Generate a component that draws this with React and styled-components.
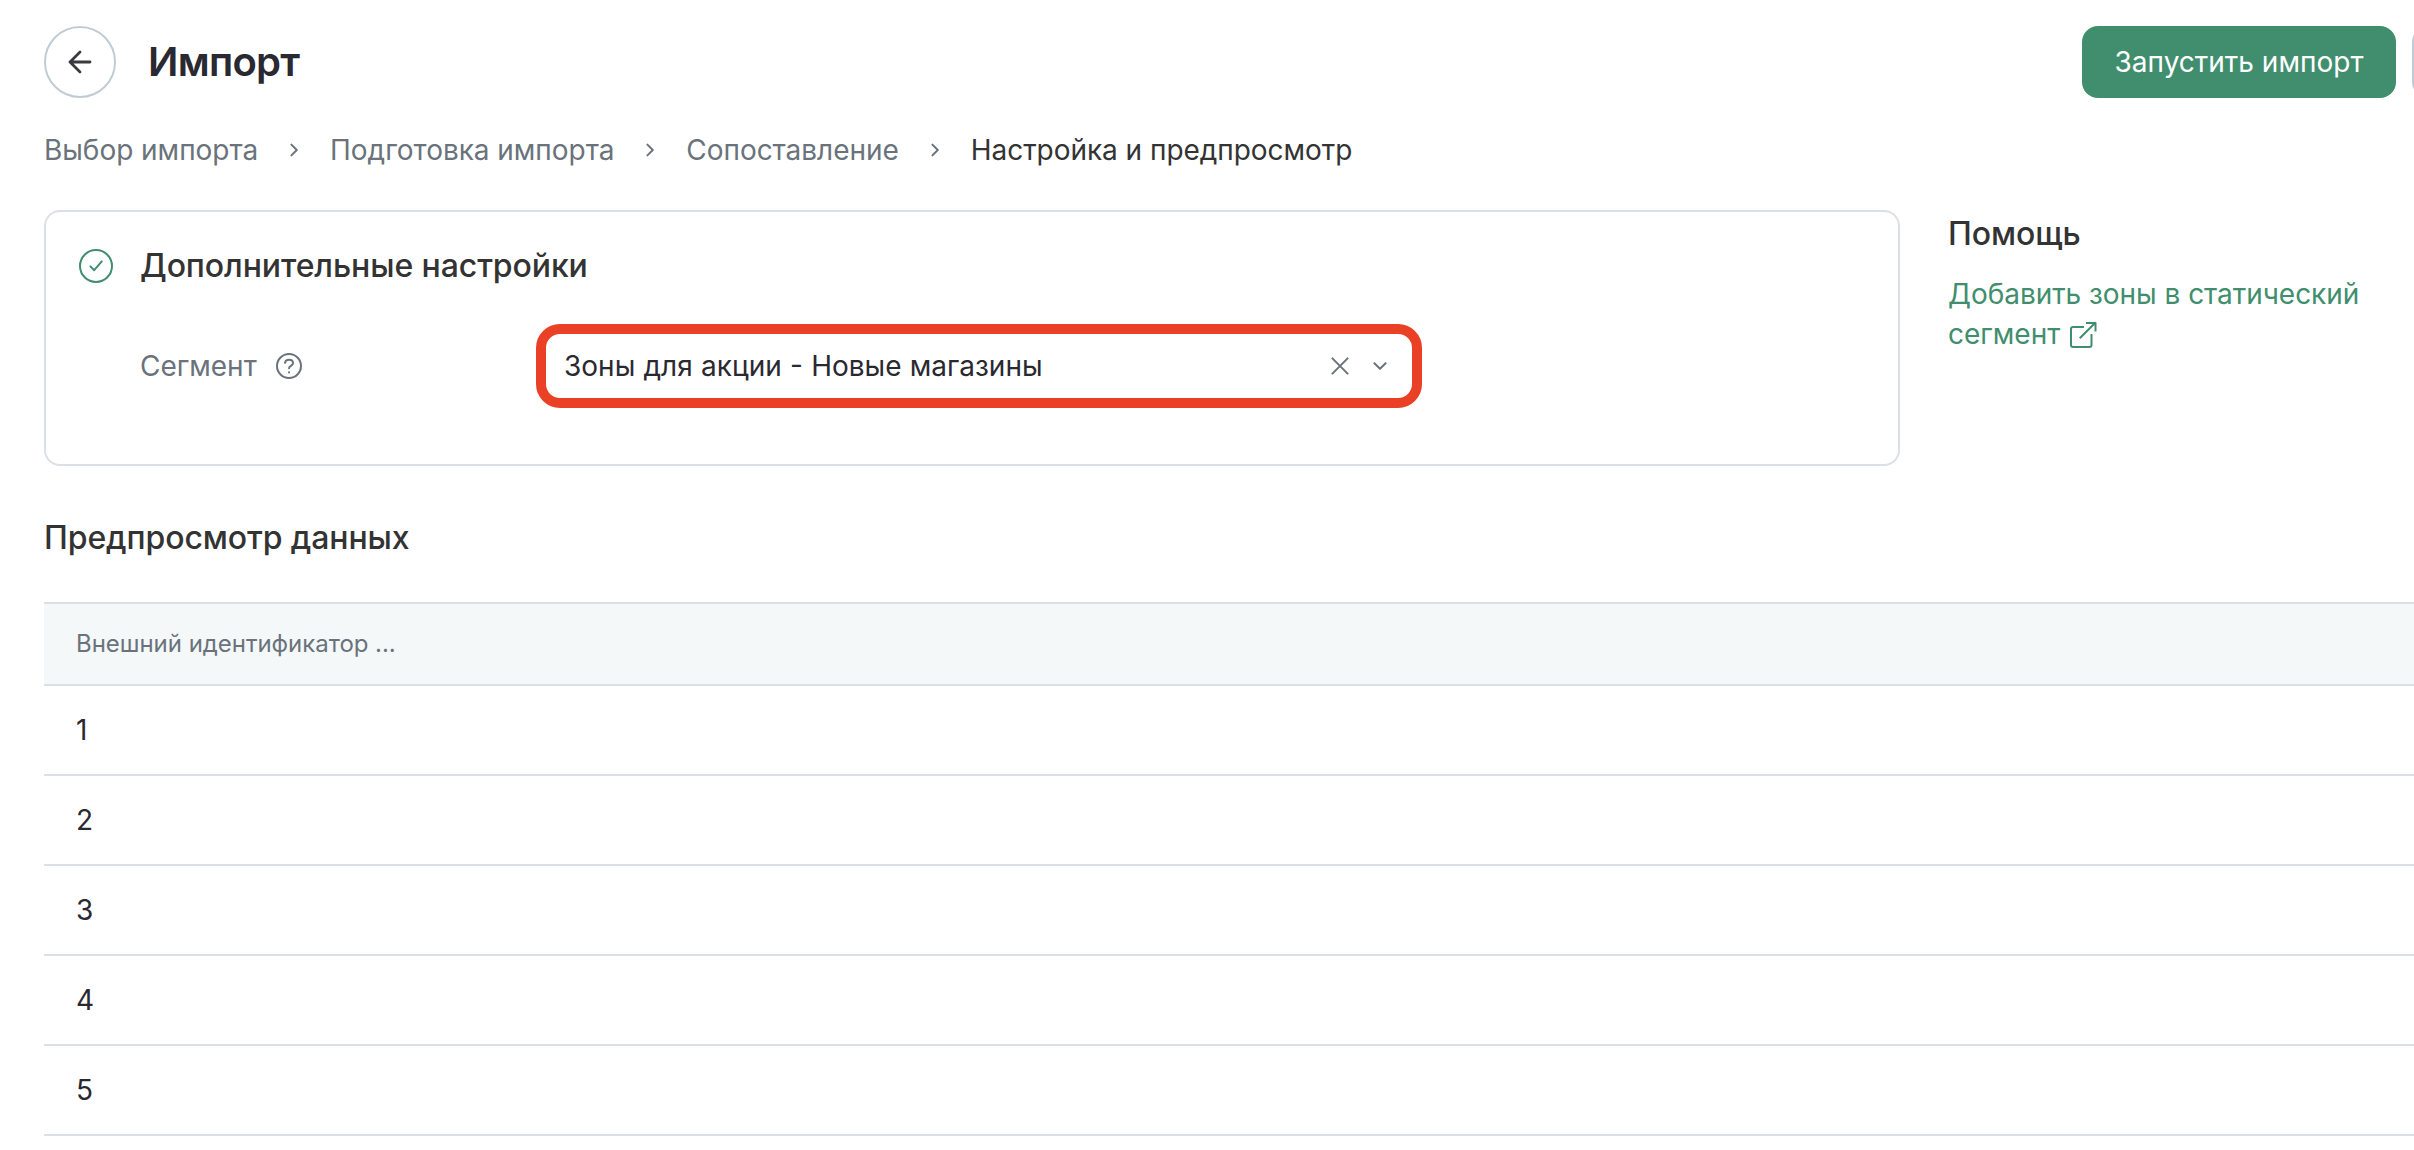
import React from 'react';
import styled, { createGlobalStyle } from 'styled-components';

const Colors = {
  text : '#333333',
  dark : '#2a2931',
  gray : '#6a737b',
  green : '#418e6e',
  border : '#dae0e6',
  control : '#c0ccd5',
  head : '#f4f8f9',
  mark : '#ea4025',
};

const steps = ['Выбор импорта', 'Подготовка импорта', 'Сопоставление', 'Настройка и предпросмотр'];
const rows = ['1', '2', '3', '4', '5'];

function App() {
  return (
    <>
      <GlobalStyle />
      <Page>
        <Header>
          <BackButton>
            <svg width="28" height="28" viewBox="0 0 28 28" fill="none" stroke="#3b3b3f" strokeWidth="2.8" strokeLinecap="round" strokeLinejoin="round">
              <path d="M24 14H4M14 4L4 14L14 24" />
            </svg>
          </BackButton>
          <Title>Импорт</Title>
          <Actions>
            <RunButton>Запустить импорт</RunButton>
            <MoreButton />
          </Actions>
        </Header>
        <Steps>
          {steps.map((step, i) => (
            <React.Fragment key={step}>
              {i > 0 && (
                <svg width="10" height="14" viewBox="0 0 10 14" fill="none" stroke={Colors.gray} strokeWidth="2" strokeLinecap="round" strokeLinejoin="round">
                  <path d="M2.4 1.6L7.8 7L2.4 12.4" />
                </svg>
              )}
              <Step $active={i === steps.length - 1}>{step}</Step>
            </React.Fragment>
          ))}
        </Steps>
        <Content>
          <Card>
            <CardHead>
              <svg width="34" height="34" viewBox="0 0 34 34" fill="none" stroke={Colors.green} strokeWidth="2" strokeLinecap="round" strokeLinejoin="round">
                <circle cx="17" cy="17" r="16" />
                <path d="M11.4 17.4L15.2 21.2L22.8 12.4" />
              </svg>
              <Heading>Дополнительные настройки</Heading>
            </CardHead>
            <Field>
              <Label>
                Сегмент
                <svg width="26" height="26" viewBox="0 0 26 26" fill="none" stroke={Colors.gray} strokeWidth="2" strokeLinecap="round">
                  <circle cx="13" cy="13" r="12" />
                  <path d="M9 9.8C9.3 7.9 11 6.8 13 6.8C15.4 6.8 17 8.3 17 10.2C17 12.8 13 12.8 13 15.2" />
                  <path d="M13 19.3V19.4" />
                </svg>
              </Label>
              <Select>
                <Value>Зоны для акции - Новые магазины</Value>
                <svg width="18" height="18" viewBox="0 0 18 18" fill="none" stroke={Colors.gray} strokeWidth="2" strokeLinecap="round">
                  <path d="M1.4 1.4L16.6 16.6M16.6 1.4L1.4 16.6" />
                </svg>
                <svg width="14" height="10" viewBox="0 0 14 10" fill="none" stroke={Colors.gray} strokeWidth="2" strokeLinecap="round" strokeLinejoin="round">
                  <path d="M1.4 2.2L7 7.8L12.6 2.2" />
                </svg>
              </Select>
            </Field>
          </Card>
          <Help>
            <Heading>Помощь</Heading>
            <Link>
              Добавить зоны в статический сегмент
              <svg width="28" height="28" viewBox="0 0 28 28" fill="none" stroke={Colors.green} strokeWidth="2" strokeLinecap="square" strokeLinejoin="round">
                <path d="M14 6H4Q2 6 2 8V24Q2 26 4 26H20.5Q22.5 26 22.5 24V14" />
                <path d="M11.5 16.5L26 2M18 2H26.5V9.5" />
              </svg>
            </Link>
          </Help>
        </Content>
        <Preview>
          <Heading>Предпросмотр данных</Heading>
          <Table>
            <HeadRow>Внешний идентификатор ...</HeadRow>
            {rows.map((row) => (
              <Row key={row}>{row}</Row>
            ))}
          </Table>
        </Preview>
      </Page>
    </>
  );
}

const GlobalStyle = createGlobalStyle`
  * {
    box-sizing : border-box;
  }
  body {
    margin : 0;
    background-color : #ffffff;
    overflow : hidden;
    font-family : Inter, 'Liberation Sans', sans-serif;
  }
  svg {
    display : block;
    flex-shrink : 0;
  }
`;
const Page = styled.div`
  height : 1150px;
  padding : 26px 0 0 44px;
  overflow : hidden;
  color : ${Colors.text};
  font-size : 28px;
  line-height : 40px;
  letter-spacing : -0.04px;
`;
const Header = styled.div`
  display : flex;
  align-items : center;
`;
const BackButton = styled.button`
  display : flex;
  align-items : center;
  justify-content : center;
  width : 72px;
  height : 72px;
  padding : 0;
  border : 2px solid ${Colors.control};
  border-radius : 50%;
  background-color : transparent;
`;
const Title = styled.h1`
  margin : 0 0 0 32px;
  font-size : 40px;
  font-weight : 600;
  line-height : 48px;
  letter-spacing : -0.7px;
  color : ${Colors.dark};
`;
const Actions = styled.div`
  display : flex;
  gap : 16px;
  width : 332px;
  margin-left : auto;
  overflow : hidden;
`;
const RunButton = styled.button`
  flex-shrink : 0;
  width : 314px;
  height : 72px;
  padding : 0;
  border : none;
  border-radius : 16px;
  background-color : ${Colors.green};
  color : #ffffff;
  font-family : inherit;
  font-size : 28px;
`;
const MoreButton = styled.button`
  flex-shrink : 0;
  width : 72px;
  height : 72px;
  border : 2px solid ${Colors.control};
  border-radius : 16px;
  background-color : transparent;
`;
const Steps = styled.div`
  display : flex;
  align-items : center;
  gap : 31px;
  margin-top : 32px;
`;
const Step = styled.div`
  color : ${({ $active }) => ($active ? Colors.text : Colors.gray)};
`;
const Content = styled.div`
  display : flex;
  gap : 48px;
  margin-top : 40px;
`;
const Card = styled.div`
  width : 1856px;
  height : 256px;
  padding : 34px 34px 34px 33px;
  border : 2px solid ${Colors.border};
  border-radius : 16px;
`;
const CardHead = styled.div`
  display : flex;
  align-items : center;
  gap : 27px;
`;
const Heading = styled.h2`
  margin : 0;
  font-size : 32px;
  font-weight : 500;
  line-height : 40px;
  letter-spacing : -0.1px;
`;
const Field = styled.div`
  display : flex;
  align-items : center;
  margin : 38px 0 0 61px;
`;
const Label = styled.div`
  display : flex;
  align-items : center;
  gap : 19px;
  width : 396px;
  color : ${Colors.gray};
`;
const Select = styled.div`
  display : flex;
  align-items : center;
  gap : 24px;
  width : 886px;
  height : 84px;
  padding : 0 25px 0 18px;
  border : 10px solid ${Colors.mark};
  border-radius : 24px;
  color : ${Colors.dark};
`;
const Value = styled.div`
  flex : 1;
  letter-spacing : 0;
  word-spacing : 0.4px;
`;
const Help = styled.div`
  width : 450px;
  padding-top : 4px;
`;
const Link = styled.a`
  display : block;
  margin-top : 20px;
  color : ${Colors.green};

  svg {
    display : inline-block;
    margin-left : 9px;
    vertical-align : -5px;
  }
`;
const Preview = styled.div`
  margin-top : 52px;
`;
const Table = styled.div`
  margin-top : 44px;
  border-top : 2px solid ${Colors.border};
`;
const Row = styled.div`
  display : flex;
  align-items : center;
  height : 90px;
  padding-left : 32px;
  border-bottom : 2px solid ${Colors.border};
  color : ${Colors.dark};
`;
const HeadRow = styled(Row)`
  height : 82px;
  background-color : ${Colors.head};
  color : ${Colors.gray};
  font-size : 24px;
`;

export default App;
